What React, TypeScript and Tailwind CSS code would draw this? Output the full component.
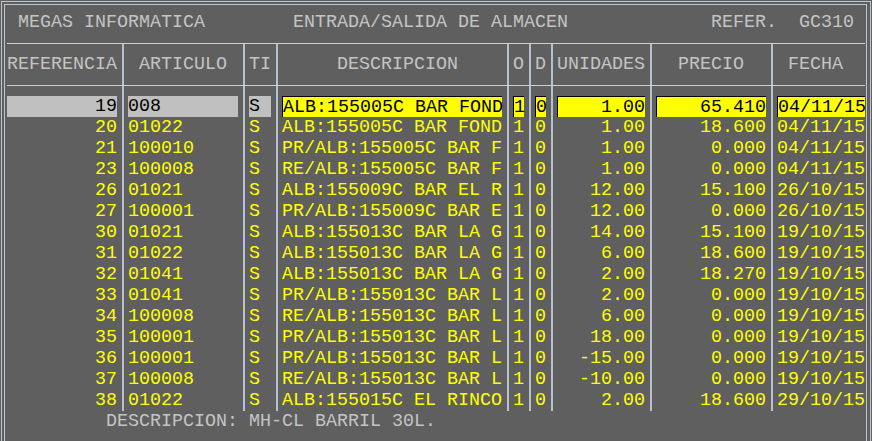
import React from 'react'

// Terminal grid: 11px per column, 21px per row
type Row = { ref: string; art: string; ti: string; desc: string; o: string; d: string; uni: string; pre: string; fecha: string }

const rows: Row[] = [
  { ref: '19', art: '008', ti: 'S', desc: 'ALB:155005C BAR FOND', o: '1', d: '0', uni: '1.00', pre: '65.410', fecha: '04/11/15' },
  { ref: '20', art: '01022', ti: 'S', desc: 'ALB:155005C BAR FOND', o: '1', d: '0', uni: '1.00', pre: '18.600', fecha: '04/11/15' },
  { ref: '21', art: '100010', ti: 'S', desc: 'PR/ALB:155005C BAR F', o: '1', d: '0', uni: '1.00', pre: '0.000', fecha: '04/11/15' },
  { ref: '23', art: '100008', ti: 'S', desc: 'RE/ALB:155005C BAR F', o: '1', d: '0', uni: '1.00', pre: '0.000', fecha: '04/11/15' },
  { ref: '26', art: '01021', ti: 'S', desc: 'ALB:155009C BAR EL R', o: '1', d: '0', uni: '12.00', pre: '15.100', fecha: '26/10/15' },
  { ref: '27', art: '100001', ti: 'S', desc: 'PR/ALB:155009C BAR E', o: '1', d: '0', uni: '12.00', pre: '0.000', fecha: '26/10/15' },
  { ref: '30', art: '01021', ti: 'S', desc: 'ALB:155013C BAR LA G', o: '1', d: '0', uni: '14.00', pre: '15.100', fecha: '19/10/15' },
  { ref: '31', art: '01022', ti: 'S', desc: 'ALB:155013C BAR LA G', o: '1', d: '0', uni: '6.00', pre: '18.600', fecha: '19/10/15' },
  { ref: '32', art: '01041', ti: 'S', desc: 'ALB:155013C BAR LA G', o: '1', d: '0', uni: '2.00', pre: '18.270', fecha: '19/10/15' },
  { ref: '33', art: '01041', ti: 'S', desc: 'PR/ALB:155013C BAR L', o: '1', d: '0', uni: '2.00', pre: '0.000', fecha: '19/10/15' },
  { ref: '34', art: '100008', ti: 'S', desc: 'RE/ALB:155013C BAR L', o: '1', d: '0', uni: '6.00', pre: '0.000', fecha: '19/10/15' },
  { ref: '35', art: '100001', ti: 'S', desc: 'PR/ALB:155013C BAR L', o: '1', d: '0', uni: '18.00', pre: '0.000', fecha: '19/10/15' },
  { ref: '36', art: '100001', ti: 'S', desc: 'PR/ALB:155013C BAR L', o: '1', d: '0', uni: '-15.00', pre: '0.000', fecha: '19/10/15' },
  { ref: '37', art: '100008', ti: 'S', desc: 'RE/ALB:155013C BAR L', o: '1', d: '0', uni: '-10.00', pre: '0.000', fecha: '19/10/15' },
  { ref: '38', art: '01022', ti: 'S', desc: 'ALB:155015C EL RINCO', o: '1', d: '0', uni: '2.00', pre: '18.600', fecha: '29/10/15' },
]

const title = ' MEGAS INFORMATICA'.padEnd(26) + 'ENTRADA/SALIDA DE ALMACEN'.padEnd(38) + 'REFER.  GC310'

// vertical separator, full row height
function Sep() {
  return (
    <div className="flex w-[11px] shrink-0">
      <div className="ml-[5px] w-[2px] bg-[#b8c0cc]" />
    </div>
  )
}

// ┬ on the first rule line
function SepTop() {
  return (
    <div className="flex w-[11px] shrink-0 flex-col">
      <div className="mt-[10px] h-[1px] bg-[#cfcfcf]" />
      <div className="ml-[5px] w-[2px] flex-1 bg-[#b8c0cc]" />
    </div>
  )
}

// ┼ on the second rule line
function SepCross() {
  return (
    <div className="flex w-[11px] shrink-0 flex-col">
      <div className="ml-[5px] h-[10px] w-[2px] bg-[#b8c0cc]" />
      <div className="h-[1px] bg-[#cfcfcf]" />
      <div className="ml-[5px] w-[2px] flex-1 bg-[#b8c0cc]" />
    </div>
  )
}

function Rule({ w }: { w: string }) {
  return (
    <div className={`${w} shrink-0`}>
      <div className="mt-[10px] h-[1px] bg-[#cfcfcf]" />
    </div>
  )
}

function RuleRow({ cross }: { cross?: boolean }) {
  const S = cross ? SepCross : SepTop
  return (
    <div className="flex h-[21px]">
      <Rule w="w-[110px]" /><S />
      <Rule w="w-[110px]" /><S />
      <Rule w="w-[22px]" /><S />
      <Rule w="w-[220px]" /><S />
      <Rule w="w-[11px]" /><S />
      <Rule w="w-[11px]" /><S />
      <Rule w="w-[88px]" /><S />
      <Rule w="w-[110px]" /><S />
      <Rule w="w-[88px]" />
    </div>
  )
}

function Cell({ w, text, right, hl }: { w: string; text: string; right?: boolean; hl?: 'gray' | 'yellow' }) {
  const box =
    hl === 'gray' ? 'bg-[#c0c0c0] text-black' :
    hl === 'yellow' ? 'bg-[#ffff00] text-black border-l border-t border-black' : ''
  return (
    <div className={`${w} shrink-0 whitespace-pre ${right ? 'text-right' : ''} ${box}`}>{text}</div>
  )
}

function DataRow({ r, active }: { r: Row; active?: boolean }) {
  const g = active ? 'gray' : undefined
  const y = active ? 'yellow' : undefined
  return (
    <div className={`flex h-[21px] ${active ? '' : 'text-[#ffff00]'}`}>
      <Cell w="w-[110px]" text={r.ref} right hl={g} /><Sep />
      <Cell w="w-[110px]" text={r.art} hl={g} /><Sep />
      <Cell w="w-[22px]" text={r.ti} hl={g} /><Sep />
      <Cell w="w-[220px]" text={r.desc} hl={y} /><Sep />
      <Cell w="w-[11px]" text={r.o} hl={y} /><Sep />
      <Cell w="w-[11px]" text={r.d} hl={y} /><Sep />
      <Cell w="w-[88px]" text={r.uni} right hl={y} /><Sep />
      <Cell w="w-[110px]" text={r.pre} right hl={y} /><Sep />
      <Cell w="w-[88px]" text={r.fecha} hl={y} />
    </div>
  )
}

export default function App() {
  return (
    <div className="h-[441px] w-[872px] overflow-hidden bg-[#5f5f5f] pl-[1px] pt-[1px] font-['Courier_New','Nimbus_Mono_PS','FreeMono','Liberation_Mono',monospace] text-[18.33px] leading-[21px] text-[#c4c4c4]">
      <div className="h-[460px] w-[870px] border-l border-r border-t border-[#bcc4d0] pl-[2px] pr-[3px] pt-[2px]">
        <div className="h-[460px] border-l border-r border-t border-[#bcc4d0] pl-[2px] pt-[7px]">
          <div className="h-[21px] whitespace-pre">{title}</div>
          <RuleRow />
          <div className="flex h-[21px]">
            <Cell w="w-[110px]" text="REFERENCIA" /><Sep />
            <Cell w="w-[110px]" text=" ARTICULO" /><Sep />
            <Cell w="w-[22px]" text="TI" /><Sep />
            <Cell w="w-[220px]" text="     DESCRIPCION" /><Sep />
            <Cell w="w-[11px]" text="O" /><Sep />
            <Cell w="w-[11px]" text="D" /><Sep />
            <Cell w="w-[88px]" text="UNIDADES" /><Sep />
            <Cell w="w-[110px]" text="  PRECIO" /><Sep />
            <Cell w="w-[88px]" text=" FECHA" />
          </div>
          <RuleRow cross />
          {rows.map((r, i) => <DataRow key={r.ref} r={r} active={i === 0} />)}
          <div className="h-[21px] whitespace-pre pl-[99px]">DESCRIPCION: MH-CL BARRIL 30L.</div>
        </div>
      </div>
    </div>
  )
}
